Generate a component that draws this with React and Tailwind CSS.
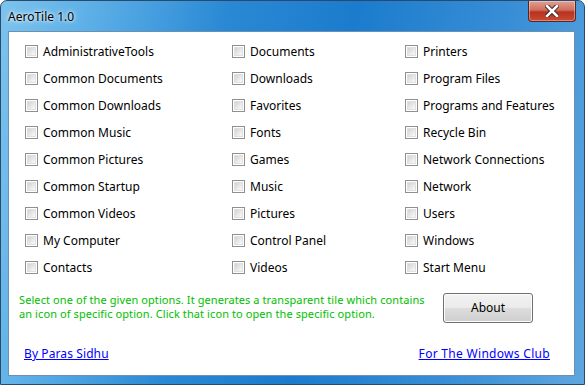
import React from "react";

const col1 = [
  "AdministrativeTools",
  "Common Documents",
  "Common Downloads",
  "Common Music",
  "Common Pictures",
  "Common Startup",
  "Common Videos",
  "My Computer",
  "Contacts",
];
const col2 = [
  "Documents",
  "Downloads",
  "Favorites",
  "Fonts",
  "Games",
  "Music",
  "Pictures",
  "Control Panel",
  "Videos",
];
const col3 = [
  "Printers",
  "Program Files",
  "Programs and Features",
  "Recycle Bin",
  "Network Connections",
  "Network",
  "Users",
  "Windows",
  "Start Menu",
];

const CheckBox = ({ label }) => (
  <label className="flex h-[27px] items-center gap-[5px]">
    <span className="flex h-[13px] w-[13px] shrink-0 items-center justify-center border border-[#8f8f8f] bg-white">
      <span className="h-[9px] w-[9px] bg-[linear-gradient(135deg,#d2d2d2,#fbfbfb)] border border-[#e0e0e0]" />
    </span>
    <span className="whitespace-nowrap text-[12px] text-black">{label}</span>
  </label>
);

const Column = ({ items }) => (
  <div className="flex flex-col">
    {items.map((item) => (
      <CheckBox key={item} label={item} />
    ))}
  </div>
);

function App() {
  return (
    <div
      className="flex h-[385px] w-[585px] flex-col overflow-hidden rounded-t-[7px] border border-[#2b4a6b] bg-[linear-gradient(100deg,#7cc3ee_0%,#5aaee6_15%,#2a89d4_35%,#1b7ccd_55%,#3a8fd6_80%,#5fa6df_100%)]"
      style={{ fontFamily: '"Noto Sans", "Liberation Sans", sans-serif' }}
    >
      {/* Title bar */}
      <div className="flex h-[30px] shrink-0 items-start justify-between">
        <div className="pl-[7px] pt-[8px] text-[12px] leading-[16px] text-black [text-shadow:0_0_6px_#ffffff,0_0_3px_#ffffff]">
          AeroTile 1.0
        </div>
        <button className="mr-[8px] flex h-[21px] w-[48px] items-center justify-center rounded-b-[4px] border border-t-0 border-[#5a2622] bg-[linear-gradient(180deg,#e0a193_0%,#cf6f5e_45%,#b8321f_55%,#c94a32_100%)] shadow-[inset_0_0_0_1px_rgba(255,255,255,0.35)]">
          <svg width="14" height="12" viewBox="0 0 14 12">
            <path
              d="M2 1 L12 11 M12 1 L2 11"
              stroke="#3a2a2a"
              strokeWidth="4.5"
              strokeLinecap="square"
            />
            <path
              d="M2 1 L12 11 M12 1 L2 11"
              stroke="#ffffff"
              strokeWidth="2.5"
              strokeLinecap="square"
            />
          </svg>
        </button>
      </div>

      {/* Client area */}
      <div className="flex flex-1 pl-[7px] pr-[9px] pb-[8px]">
        <div className="flex flex-1 flex-col border border-[#6d8fb0] bg-white">
          <div className="grid grid-cols-[207px_173px_1fr] pl-[16px] pt-[6px]">
            <Column items={col1} />
            <Column items={col2} />
            <Column items={col3} />
          </div>

          <div className="mt-[12px] flex items-start justify-between pl-[10px] pr-[41px]">
            <div className="text-[11px] leading-[14px] tracking-[0.09px] text-[#00c000]">
              <p>Select one of the given options. It generates a transparent tile which contains</p>
              <p>an icon of specific option. Click that icon to open the specific option.</p>
            </div>
            <button className="h-[30px] w-[90px] rounded-[3px] border border-[#707070] bg-[linear-gradient(180deg,#f2f2f2_0%,#ebebeb_50%,#dddddd_50%,#cfcfcf_100%)] text-[12px] text-black shadow-[inset_0_0_0_1px_#fcfcfc]">
              About
            </button>
          </div>

          <div className="mt-auto mb-[12px] flex items-center justify-between pl-[15px] pr-[24px]">
            <a href="#" className="text-[12px] tracking-[0.1px] text-[#0000ff] underline">
              By Paras Sidhu
            </a>
            <a href="#" className="text-[12px] tracking-[0.3px] text-[#0000ff] underline">
              For The Windows Club
            </a>
          </div>
        </div>
      </div>
    </div>
  );
}

export default App;
